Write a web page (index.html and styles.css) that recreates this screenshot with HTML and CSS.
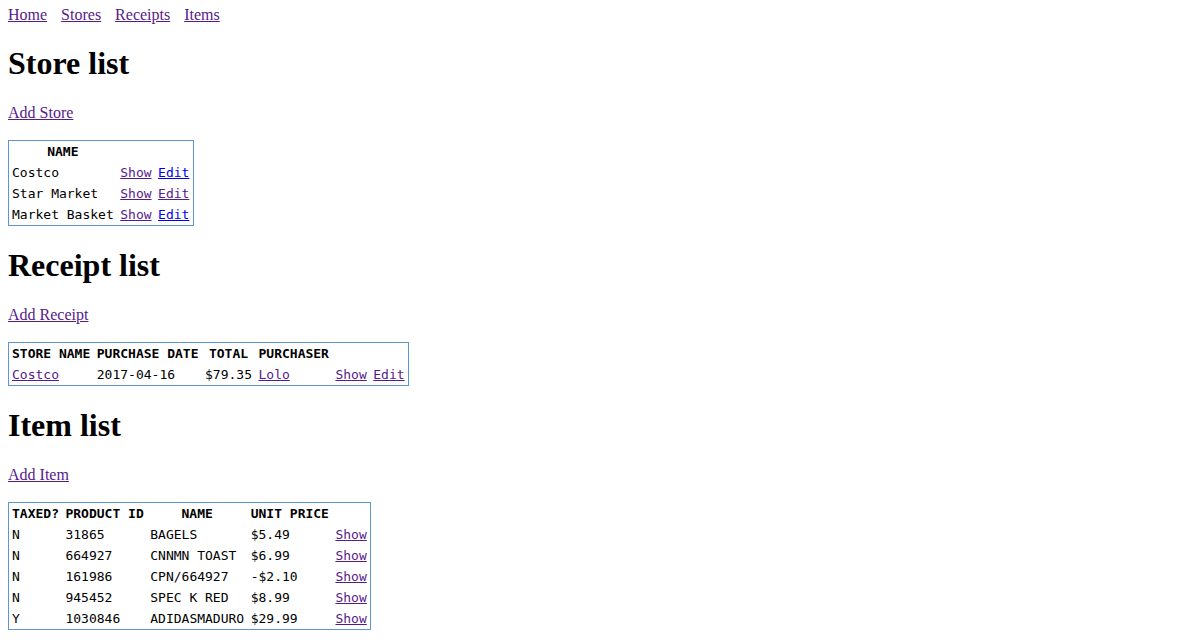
FILE: index.html
```html
<!DOCTYPE html>
<html>
<head>
<meta charset="utf-8">
<title>Stores</title>
<link rel="stylesheet" href="styles.css">
</head>
<body>
<nav class="nav">
  <a class="v" href="#">Home</a>
  <a class="v" href="#">Stores</a>
  <a class="v" href="#">Receipts</a>
  <a class="v" href="#">Items</a>
</nav>

<h1>Store list</h1>
<p><a class="v" href="#">Add Store</a></p>
<table class="list">
  <tr><th>NAME</th><th></th><th></th></tr>
  <tr><td>Costco</td><td><a class="v" href="#">Show</a></td><td><a href="#">Edit</a></td></tr>
  <tr><td>Star Market</td><td><a class="v" href="#">Show</a></td><td><a class="v" href="#">Edit</a></td></tr>
  <tr><td>Market Basket</td><td><a class="v" href="#">Show</a></td><td><a href="#">Edit</a></td></tr>
</table>

<h1>Receipt list</h1>
<p><a class="v" href="#">Add Receipt</a></p>
<table class="list">
  <tr><th>STORE NAME</th><th>PURCHASE DATE</th><th>TOTAL</th><th>PURCHASER</th><th></th><th></th></tr>
  <tr><td><a class="v" href="#">Costco</a></td><td>2017-04-16</td><td>$79.35</td><td><a class="v" href="#">Lolo</a></td><td><a class="v" href="#">Show</a></td><td><a class="v" href="#">Edit</a></td></tr>
</table>

<h1>Item list</h1>
<p><a class="v" href="#">Add Item</a></p>
<table class="list">
  <tr><th>TAXED?</th><th>PRODUCT ID</th><th>NAME</th><th>UNIT PRICE</th><th></th></tr>
  <tr><td>N</td><td>31865</td><td>BAGELS</td><td>$5.49</td><td class="r"><a class="v" href="#">Show</a></td></tr>
  <tr><td>N</td><td>664927</td><td>CNNMN TOAST</td><td>$6.99</td><td class="r"><a class="v" href="#">Show</a></td></tr>
  <tr><td>N</td><td>161986</td><td>CPN/664927</td><td>-$2.10</td><td class="r"><a class="v" href="#">Show</a></td></tr>
  <tr><td>N</td><td>945452</td><td>SPEC K RED</td><td>$8.99</td><td class="r"><a class="v" href="#">Show</a></td></tr>
  <tr><td>Y</td><td>1030846</td><td>ADIDASMADURO</td><td>$29.99</td><td class="r"><a class="v" href="#">Show</a></td></tr>
</table>
</body>
</html>
```

FILE: styles.css
```css
body {
  margin: 6px 8px 8px 8px;
  font-family: "Liberation Serif", "Times New Roman", serif;
  font-size: 16px;
  color: #000;
  background: #fff;
}

a {
  color: #0000ee;
  text-decoration: underline;
}

a.v {
  color: #551a8b;
}

.nav {
  display: flex;
  gap: 14px;
}

h1 {
  font-size: 32px;
  font-weight: bold;
  margin: 21.44px 0;
}

p {
  margin: 16px 0;
}

.list {
  margin-top: 18px;
  border: 1px solid #5b95d6;
  border-collapse: separate;
  border-spacing: 0;
  font-family: "DejaVu Sans Mono", monospace;
  font-size: 13px;
}

.list th,
.list td {
  padding: 3px 3.5px 3px 3px;
  line-height: 15px;
}

.list th {
  font-weight: bold;
  text-align: center;
}

.list td {
  text-align: left;
}

.list td.r {
  text-align: right;
}
```
